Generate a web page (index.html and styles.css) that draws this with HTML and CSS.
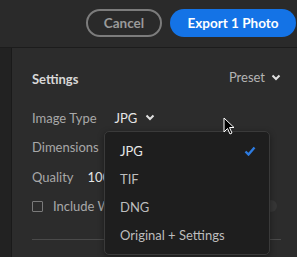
FILE: index.html
```html
<!DOCTYPE html>
<html lang="en">
<head>
    <meta charset="UTF-8">
    <title>Export</title>
    <link rel="stylesheet" href="styles.css">
</head>
<body>
    <div class="topbar">
        <button class="btn btn-cancel">Cancel</button>
        <button class="btn btn-export">Export 1 Photo</button>
    </div>
    <div class="main">
        <div class="gutter"></div>
        <div class="panel">
            <div class="panel-head">
                <div class="title">Settings</div>
                <div class="preset">Preset
                    <svg class="chev" width="10" height="7" viewBox="0 0 10 7"><path d="M1.5 1.5 L5 5 L8.5 1.5" fill="none" stroke="currentColor" stroke-width="2"/></svg>
                </div>
            </div>
            <div class="row">
                <span class="label">Image Type</span>
                <span class="value">JPG
                    <svg class="chev" width="10" height="7" viewBox="0 0 10 7"><path d="M1.5 1.5 L5 5 L8.5 1.5" fill="none" stroke="currentColor" stroke-width="2"/></svg>
                </span>
            </div>
            <div class="row">
                <span class="label">Dimensions</span>
            </div>
            <div class="row">
                <span class="label">Quality</span>
                <span class="value value-tight">100</span>
            </div>
            <div class="row">
                <span class="checkbox"></span>
                <span class="label">Include Watermark</span>
                <span class="gear"></span>
            </div>
            <div class="divider"></div>
        </div>
    </div>

    <!-- open Image Type menu -->
    <div class="menu">
        <div class="menu-item">JPG
            <svg class="tick" width="12" height="10" viewBox="0 0 12 10"><path d="M1.5 5.5 L4.5 8.5 L10.5 1.5" fill="none" stroke="#2d7be0" stroke-width="2.4"/></svg>
        </div>
        <div class="menu-item">TIF</div>
        <div class="menu-item">DNG</div>
        <div class="menu-item">Original + Settings</div>
    </div>

    <svg class="cursor" width="13" height="18" viewBox="0 0 13 18"><path d="M1 1 L1 15 L4.5 11.5 L7 17 L9 16 L6.5 10.5 L11 10.5 Z" fill="#000" stroke="#fff" stroke-width="1"/></svg>
</body>
</html>
```

FILE: styles.css
```css
* {
    box-sizing: border-box;
    margin: 0;
    padding: 0;
    font-family: 'Lato', 'Open Sans', sans-serif;
}
body {
    width: 297px;
    height: 257px;
    overflow: hidden;
    background: #2b2b2b;
    position: relative;
    font-size: 13px;
}
.topbar {
    height: 48px;
    display: flex;
    justify-content: flex-end;
    align-items: center;
    gap: 8px;
    padding-right: 1px;
    padding-bottom: 2px;
    background: #2a2a2a;
    border-bottom: 1px solid #1c1c1c;
}
.btn {
    height: 28px;
    border-radius: 14px;
    font-size: 13.5px;
    font-weight: bold;
    cursor: pointer;
}
.btn-cancel {
    width: 76px;
    background: transparent;
    border: 2px solid #7c7c7c;
    color: #9a9a9a;
}
.btn-export {
    width: 126px;
    background: #1473e6;
    border: none;
    color: #ffffff;
}
.main {
    display: flex;
    height: 209px;
}
.gutter {
    width: 12px;
    background: #222222;
    border-right: 1px solid #1a1a1a;
}
.panel {
    flex: 1;
    padding: 21px 16px 0 20px;
    background: #2c2c2c;
}
.panel-head {
    display: flex;
    justify-content: space-between;
    align-items: center;
    height: 20px;
    margin-bottom: 14px;
}
.title {
    color: #d8d8d8;
    font-weight: bold;
    font-size: 13px;
}
.preset {
    color: #b4b4b4;
    display: flex;
    align-items: center;
    gap: 6px;
    margin-top: -4px;
}
.chev {
    color: #e0e0e0;
}
.row {
    display: flex;
    align-items: center;
    height: 29.5px;
    gap: 18px;
    color: #a8a8a8;
}
.value {
    color: #e6e6e6;
    display: flex;
    align-items: center;
    gap: 8px;
}
.value-tight {
    margin-left: -4px;
}
.checkbox {
    width: 11px;
    height: 11px;
    border: 1px solid #7a7a7a;
    border-radius: 1px;
    margin-right: -8px;
}
.gear {
    width: 12px;
    height: 12px;
    border-radius: 50%;
    background: #363636;
    margin-left: auto;
    margin-right: 4px;
}
.divider {
    margin-top: 18px;
    height: 1px;
    background: #4a4a4a;
}
.menu {
    position: absolute;
    left: 104px;
    top: 131px;
    width: 166px;
    padding: 5px 0 5px;
    background: #1e1e1e;
    border: 1px solid #3a3a3a;
    border-radius: 5px;
    box-shadow: 0 2px 6px rgba(0, 0, 0, 0.4);
}
.menu-item {
    height: 28px;
    display: flex;
    align-items: center;
    justify-content: space-between;
    padding: 0 13px 0 15px;
    color: #bdbdbd;
}
.menu-item:first-child {
    color: #e8e8e8;
}
.cursor {
    position: absolute;
    left: 223px;
    top: 117px;
}
```
